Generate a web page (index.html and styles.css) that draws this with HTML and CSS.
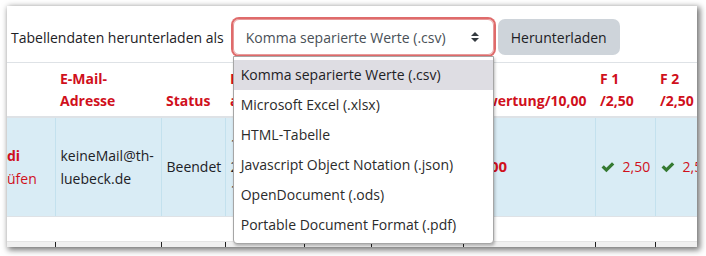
FILE: index.html
```html
<!DOCTYPE html>
<html lang="de">
<head>
  <meta charset="UTF-8">
  <title>Tabellendaten herunterladen</title>
  <link rel="stylesheet" href="styles.css">
</head>
<body>
  <div class="shot">
    <form class="download-bar">
      <label class="download-label" for="format">Tabellendaten herunterladen als</label>
      <div class="select-wrap">
        <div class="select" id="format">
          <span>Komma separierte Werte (.csv)</span>
          <svg class="caret" width="10" height="12" viewBox="0 0 10 12">
            <path d="M1 5 L5 1 L9 5 Z M1 7 L5 11 L9 7 Z" fill="#343a40"/>
          </svg>
        </div>
        <ul class="menu">
          <li class="active">Komma separierte Werte (.csv)</li>
          <li>Microsoft Excel (.xlsx)</li>
          <li>HTML-Tabelle</li>
          <li>Javascript Object Notation (.json)</li>
          <li>OpenDocument (.ods)</li>
          <li>Portable Document Format (.pdf)</li>
        </ul>
      </div>
      <button type="button" class="btn">Herunterladen</button>
    </form>

    <table class="grades">
      <colgroup>
        <col style="width:48px"><col style="width:106px"><col style="width:64px">
        <col style="width:79px"><col style="width:67px"><col style="width:92px">
        <col style="width:132px"><col style="width:60px"><col style="width:60px">
      </colgroup>
      <thead>
        <tr>
          <th></th>
          <th>E-Mail-<br>Adresse</th>
          <th>Status</th>
          <th>B<br>a</th>
          <th></th>
          <th></th>
          <th>Bewertung/10,00</th>
          <th>F 1<br>/2,50</th>
          <th>F 2<br>/2,50</th>
        </tr>
      </thead>
      <tbody>
        <tr class="row-hl">
          <td class="first"><b>di</b><br><span class="red">üfen</span></td>
          <td>keineMail@th-<br>luebeck.de</td>
          <td>Beendet</td>
          <td>1<br>2<br>1</td>
          <td></td>
          <td></td>
          <td class="grade">10,00</td>
          <td><span class="mark"><svg class="check" width="14" height="12" viewBox="0 0 14 12"><path d="M0.5 6.5 L2.8 4.2 L5.4 6.8 L11 1.2 L13.3 3.5 L5.4 11.2 Z" fill="#357a32"/></svg>2,50</span></td>
          <td><span class="mark"><svg class="check" width="14" height="12" viewBox="0 0 14 12"><path d="M0.5 6.5 L2.8 4.2 L5.4 6.8 L11 1.2 L13.3 3.5 L5.4 11.2 Z" fill="#357a32"/></svg>2,50</span></td>
        </tr>
        <tr class="row-empty">
          <td></td><td></td><td></td><td></td><td></td><td></td><td></td><td></td><td></td>
        </tr>
        <tr class="row-foot">
          <td></td><td></td><td></td><td></td><td></td><td></td><td></td><td></td><td></td>
        </tr>
      </tbody>
    </table>
  </div>
</body>
</html>
```

FILE: styles.css
```css
body { margin: 0; background: #fff; font-family: "Open Sans", "Noto Sans", Arial, sans-serif; color: #1d2125; }
.shot { margin: 6px 9px 9px 7px; width: 690px; height: 241px; overflow: hidden; position: relative; background: #fff; box-shadow: 2px 2px 6px 1px rgba(0,0,0,0.55); }

.download-bar { display: flex; align-items: center; height: 36px; padding: 13px 0 7px 4px; border-bottom: 1px solid #dee2e6; box-sizing: content-box; }
.download-label { font-size: 14px; margin-right: 9px; }
.select-wrap { position: relative; }
.select { width: 261px; height: 36px; box-sizing: border-box; display: flex; align-items: center; justify-content: space-between; padding: 0 13px 0 12px; border: 1px solid #e79a9a; border-radius: 6px; box-shadow: 0 0 0 2px #df6b6b; font-size: 14px; color: #495057; }
.caret { display: block; }
.btn { margin-left: 4px; height: 36px; padding: 0 13px; border: none; border-radius: 7px; background: #ced4da; color: #1d2125; font-family: inherit; font-size: 14px; }

.menu { position: absolute; z-index: 2; top: 37px; left: 0; width: 261px; box-sizing: border-box; margin: 0; padding: 3px 0; list-style: none; background: #fff; border: 1px solid #a6a6a6; border-radius: 0 0 4px 4px; box-shadow: 1px 2px 3px rgba(0,0,0,0.25); font-size: 14px; }
.menu li { height: 30px; line-height: 30px; padding-left: 7px; color: #2b2b2b; }
.menu li.active { background: #dedde3; color: #1d2125; }

.grades { table-layout: fixed; width: 708px; border-collapse: collapse; font-size: 14px; }
.grades th { text-align: left; vertical-align: bottom; color: #d0101c; font-weight: 700; line-height: 22px; padding: 5px 5px 4px; border-bottom: 2px solid #dee2e6; }
.grades td { vertical-align: middle; line-height: 23px; padding: 0 5px; }
.row-hl td { height: 99px; background: #d9ecf5; border-left: 1px solid #c3e1ee; border-bottom: 1px solid #dee2e6; box-sizing: border-box; }
.row-hl td.first { border-left: none; padding-left: 0; color: #d0101c; }
.red { color: #d0101c; }
.grade { color: #d0101c; font-weight: 700; font-size: 15px; }
.mark { display: inline-flex; align-items: center; color: #d0101c; }
.check { margin-right: 8px; }
.row-empty td { height: 24px; }
.row-foot td { height: 8px; background: #f0f0f0; border-top: 1px solid #e4e4e4; border-left: 1px solid #222; }
.row-foot td:first-child { border-left: none; }
```
